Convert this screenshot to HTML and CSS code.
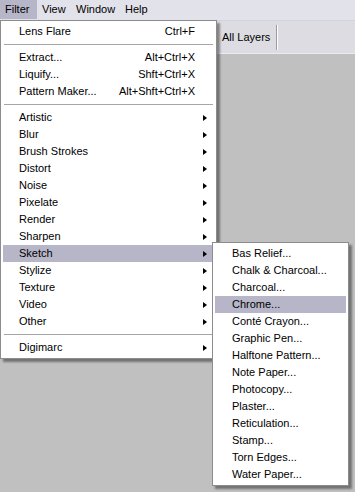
FILE: index.html
```html
<html>
  <head>
    <link rel="stylesheet" href="styles.css">
  </head>
  <body>
    <div id="menubar">
      <span class="top active" id="m-filter">Filter</span>
      <span class="top" id="m-view">View</span>
      <span class="top" id="m-window">Window</span>
      <span class="top">Help</span>
    </div>
    <div id="toolbar">
      <span class="tool-label">All Layers</span>
      <span class="tool-sep"></span>
    </div>

    <!-- Filter dropdown -->
    <div class="menu" id="filter-menu">
      <div class="item"><span>Lens Flare</span><span class="key">Ctrl+F</span><span></span></div>
      <div class="sep"></div>
      <div class="item"><span>Extract...</span><span class="key">Alt+Ctrl+X</span><span></span></div>
      <div class="item"><span>Liquify...</span><span class="key">Shft+Ctrl+X</span><span></span></div>
      <div class="item"><span>Pattern Maker...</span><span class="key">Alt+Shft+Ctrl+X</span><span></span></div>
      <div class="sep"></div>
      <div class="item"><span>Artistic</span><span></span><span class="arrow"></span></div>
      <div class="item"><span>Blur</span><span></span><span class="arrow"></span></div>
      <div class="item"><span>Brush Strokes</span><span></span><span class="arrow"></span></div>
      <div class="item"><span>Distort</span><span></span><span class="arrow"></span></div>
      <div class="item"><span>Noise</span><span></span><span class="arrow"></span></div>
      <div class="item"><span>Pixelate</span><span></span><span class="arrow"></span></div>
      <div class="item"><span>Render</span><span></span><span class="arrow"></span></div>
      <div class="item"><span>Sharpen</span><span></span><span class="arrow"></span></div>
      <div class="item hot"><span>Sketch</span><span></span><span class="arrow"></span></div>
      <div class="item"><span>Stylize</span><span></span><span class="arrow"></span></div>
      <div class="item"><span>Texture</span><span></span><span class="arrow"></span></div>
      <div class="item"><span>Video</span><span></span><span class="arrow"></span></div>
      <div class="item"><span>Other</span><span></span><span class="arrow"></span></div>
      <div class="sep"></div>
      <div class="item"><span>Digimarc</span><span></span><span class="arrow"></span></div>
    </div>

    <!-- Sketch submenu -->
    <div class="menu" id="sketch-menu">
      <div class="sub">Bas Relief...</div>
      <div class="sub">Chalk &amp; Charcoal...</div>
      <div class="sub">Charcoal...</div>
      <div class="sub hot">Chrome...</div>
      <div class="sub">Cont&eacute; Crayon...</div>
      <div class="sub">Graphic Pen...</div>
      <div class="sub">Halftone Pattern...</div>
      <div class="sub">Note Paper...</div>
      <div class="sub">Photocopy...</div>
      <div class="sub">Plaster...</div>
      <div class="sub">Reticulation...</div>
      <div class="sub">Stamp...</div>
      <div class="sub">Torn Edges...</div>
      <div class="sub">Water Paper...</div>
    </div>
  </body>
</html>
```

FILE: styles.css
```css
body{
  margin: 0;
  background-color: #c0c0c0;
  font-family: "Liberation Sans", Arial, sans-serif;
  font-size: 11px;
  color: #000000;
}

#menubar{
  display: flex;
  height: 20px;
  background-color: #e2e2ea;
  border-bottom: 1px solid #d2d2da;
}
.top{
  line-height: 19px;
  height: 19px;
  padding-left: 5px;
}
#m-filter{
  width: 32px;
}
#m-view{
  width: 29px;
}
#m-window{
  width: 44px;
}
.top.active{
  background-color: #b7b6c8;
}

#toolbar{
  display: flex;
  align-items: center;
  height: 32px;
  padding-left: 222px;
  background-color: #dcdce2;
  border-bottom: 1px solid #ececf0;
}
.tool-label{
  width: 54px;
}
.tool-sep{
  width: 1px;
  height: 25px;
  background-color: #9a9aa0;
  border-right: 1px solid #ffffff;
}

/* popup menus */
.menu{
  position: absolute;
  background-color: #ffffff;
  border: 1px solid #8c8c8c;
  padding: 2px;
  box-shadow: 3px 3px 2px rgba(0,0,0,0.4);
}
#filter-menu{
  top: 20px;
  left: 0;
  width: 211px;
}
#sketch-menu{
  top: 242px;
  left: 212px;
  width: 131px;
}

.item{
  display: grid;
  grid-template-columns: 1fr auto 19px;
  align-items: center;
  height: 17px;
  line-height: 17px;
  padding-left: 16px;
}
.sub{
  height: 17px;
  line-height: 17px;
  padding-left: 17px;
}
.hot{
  background-color: #b7b6c8;
}
.key{
  text-align: right;
}
.arrow{
  justify-self: center;
  width: 0;
  height: 0;
  border-top: 3.5px solid transparent;
  border-bottom: 3.5px solid transparent;
  border-left: 4px solid #000000;
}
.sep{
  height: 1px;
  margin: 4px 1px;
  background-color: #a6a6a6;
}
```
